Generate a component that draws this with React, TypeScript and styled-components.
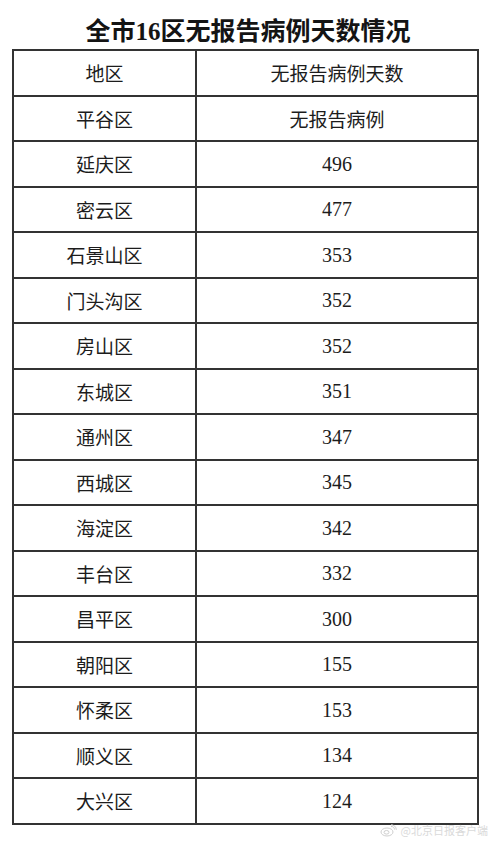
import React from 'react';
import styled, { createGlobalStyle } from 'styled-components';

const GlobalStyle = createGlobalStyle`
  html, body {
    margin: 0;
    padding: 0;
    background: #ffffff;
  }
  body {
    width: 496px;
    height: 844px;
    overflow: hidden;
    font-family: "Liberation Serif", "Noto Sans CJK SC", serif;
  }
`;

const Page = styled.div`
  position: relative;
  width: 496px;
  height: 844px;
  background: #fff;
`;

const Title = styled.h1`
  margin: 0;
  height: 49px;
  display: flex;
  align-items: center;
  justify-content: center;
  padding-top: 8px;
  box-sizing: border-box;
  font-family: "Liberation Serif", "Noto Sans CJK SC", serif;
  font-weight: 700;
  font-size: 25px;
  color: #141414;
`;

const Table = styled.table`
  margin-left: 12px;
  width: 467px;
  border-collapse: collapse;
  table-layout: fixed;
`;

const Row = styled.tr`
  height: 45.5px;
`;

const Cell = styled.td<{ $num?: boolean }>`
  border: 2px solid #333;
  padding: 0;
  text-align: center;
  vertical-align: middle;
  color: #1c1c1c;
  font-family: ${(p) =>
    p.$num ? '"Liberation Serif", serif' : '"Noto Sans CJK SC", sans-serif'};
  font-size: ${(p) => (p.$num ? '20px' : '19px')};
  line-height: 1;
`;

const Watermark = styled.div`
  position: absolute;
  right: 8px;
  bottom: 6px;
  display: flex;
  align-items: center;
  gap: 4px;
  font-family: "Noto Sans CJK SC", sans-serif;
  font-size: 11px;
  color: #dadada;
`;

const rows: [string, string][] = [
  ['平谷区', '无报告病例'],
  ['延庆区', '496'],
  ['密云区', '477'],
  ['石景山区', '353'],
  ['门头沟区', '352'],
  ['房山区', '352'],
  ['东城区', '351'],
  ['通州区', '347'],
  ['西城区', '345'],
  ['海淀区', '342'],
  ['丰台区', '332'],
  ['昌平区', '300'],
  ['朝阳区', '155'],
  ['怀柔区', '153'],
  ['顺义区', '134'],
  ['大兴区', '124'],
];

const WeiboLogo = () => (
  <svg width="17" height="13" viewBox="0 0 17 13" fill="none" stroke="#cfcfcf" strokeWidth="1">
    <ellipse cx="7" cy="8" rx="6" ry="4" />
    <ellipse cx="6.5" cy="8.3" rx="2.5" ry="1.8" />
    <path d="M11 2.5a3 3 0 0 1 3.5 3" />
    <path d="M11 0.8a5 5 0 0 1 5.3 5" />
  </svg>
);

export default function App() {
  return (
    <Page>
      <GlobalStyle />
      <Title>全市16区无报告病例天数情况</Title>
      <Table>
        <colgroup>
          <col style={{ width: 183 }} />
          <col />
        </colgroup>
        <tbody>
          <Row>
            <Cell>地区</Cell>
            <Cell>无报告病例天数</Cell>
          </Row>
          {rows.map(([area, days]) => (
            <Row key={area}>
              <Cell>{area}</Cell>
              <Cell $num={/^\d+$/.test(days)}>{days}</Cell>
            </Row>
          ))}
        </tbody>
      </Table>
      <Watermark>
        <WeiboLogo />
        <span>@北京日报客户端</span>
      </Watermark>
    </Page>
  );
}
